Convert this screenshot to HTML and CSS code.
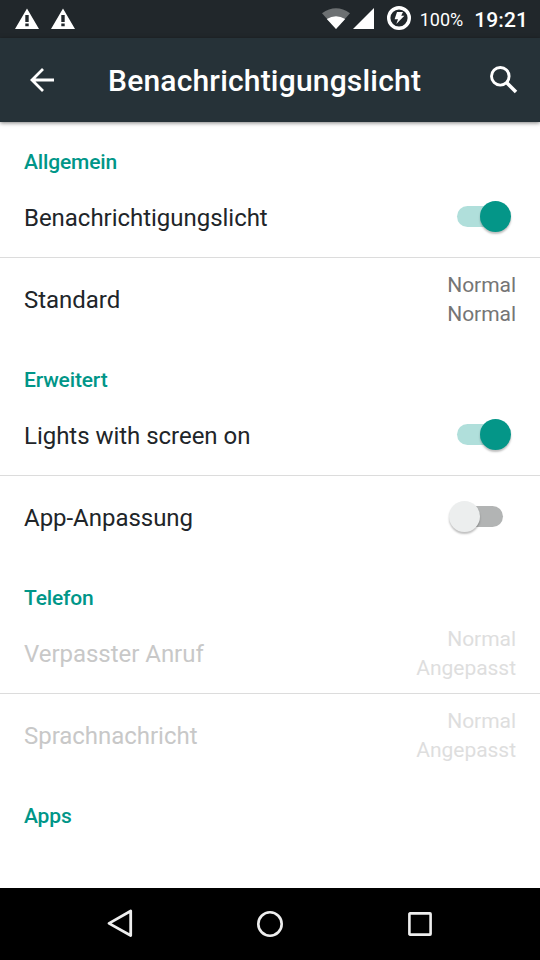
FILE: index.html
```html
<!DOCTYPE html>
<html lang="de">
<head>
    <meta charset="UTF-8">
    <meta name="viewport" content="width=device-width, initial-scale=1.0">
    <title>Benachrichtigungslicht</title>
    <link rel="stylesheet" href="styles.css">
</head>
<body>
    <div class="status-bar">
        <div class="status-left">
            <svg width="24" height="22" viewBox="0 0 24 22">
                <path fill="#fff" fill-rule="evenodd" d="M12 .5 L24 21 H0 Z M10.3 7 V14 H13.7 V7 Z M10.3 15.5 V18.2 H13.7 V15.5 Z"/>
            </svg>
            <svg width="24" height="22" viewBox="0 0 24 22">
                <path fill="#fff" fill-rule="evenodd" d="M12 .5 L24 21 H0 Z M10.3 7 V14 H13.7 V7 Z M10.3 15.5 V18.2 H13.7 V15.5 Z"/>
            </svg>
        </div>
        <div class="status-right">
            <svg class="wifi" width="28" height="22" viewBox="0 0 28 22">
                <path fill="#6c7072" d="M0 5.2 Q14 -4.8 28 5.2 L14 21 Z"/>
                <path fill="#fff" d="M4.8 11 Q14 5.6 23.2 11 L14 21 Z"/>
            </svg>
            <svg class="signal" width="21" height="22" viewBox="0 0 21 22">
                <path fill="#fff" d="M21 0 V21 H0 Z"/>
            </svg>
            <svg class="charge" width="24" height="24" viewBox="0 0 24 24">
                <circle cx="12" cy="12" r="10.3" fill="none" stroke="#fff" stroke-width="3.4"/>
                <path fill="#fff" d="M10 6 H16 L14.2 9.8 H17.4 L9.3 18 L11 13.3 H7.6 Z"/>
            </svg>
            <span class="battery">100%</span>
            <span class="clock">19:21</span>
        </div>
    </div>

    <div class="toolbar">
        <svg width="24" height="24" viewBox="0 0 24 24">
            <path fill="none" stroke="#fff" stroke-width="2.8" d="M24 12 H2.5 M13 1 L2 12 L13 23"/>
        </svg>
        <h1>Benachrichtigungslicht</h1>
        <svg width="28" height="28" viewBox="0 0 28 28">
            <circle cx="10.3" cy="10.3" r="8.8" fill="none" stroke="#fff" stroke-width="2.9"/>
            <path fill="none" stroke="#fff" stroke-width="3.6" d="M16.5 16.5 L26 26"/>
        </svg>
    </div>

    <div class="content">
        <h2>Allgemein</h2>
        <div class="item">
            <span class="item-title">Benachrichtigungslicht</span>
            <div class="switch on"><div class="thumb"></div></div>
        </div>
        <div class="item">
            <span class="item-title">Standard</span>
            <div class="item-value">Normal<br>Normal</div>
        </div>

        <h2>Erweitert</h2>
        <div class="item">
            <span class="item-title">Lights with screen on</span>
            <div class="switch on"><div class="thumb"></div></div>
        </div>
        <div class="item">
            <span class="item-title">App-Anpassung</span>
            <div class="switch"><div class="thumb"></div></div>
        </div>

        <h2>Telefon</h2>
        <div class="item disabled">
            <span class="item-title">Verpasster Anruf</span>
            <div class="item-value">Normal<br>Angepasst</div>
        </div>
        <div class="item disabled">
            <span class="item-title">Sprachnachricht</span>
            <div class="item-value">Normal<br>Angepasst</div>
        </div>

        <h2>Apps</h2>
    </div>

    <div class="nav-bar">
        <svg width="30" height="30" viewBox="0 0 30 30">
            <path fill="none" stroke="#eee" stroke-width="2.8" stroke-linejoin="round" d="M25.7 2 V26.5 L4 14.4 Z"/>
        </svg>
        <svg width="30" height="30" viewBox="0 0 30 30">
            <circle cx="15" cy="15" r="11.7" fill="none" stroke="#eee" stroke-width="2.6"/>
        </svg>
        <svg width="30" height="30" viewBox="0 0 30 30">
            <rect x="4.4" y="4.4" width="21.2" height="21.2" rx=".6" fill="none" stroke="#eee" stroke-width="2.6"/>
        </svg>
    </div>
</body>
</html>
```

FILE: styles.css
```css
* {
    box-sizing: border-box;
}

body {
    margin: 0;
    height: 960px;
    display: flex;
    flex-direction: column;
    overflow: hidden;
    font-family: Roboto, "Noto Sans", sans-serif;
    background-color: #fff;
}

svg {
    display: block;
    flex-shrink: 0;
}

.status-bar {
    display: flex;
    justify-content: space-between;
    height: 38px;
    padding: 0 12px 0 15px;
    background-color: #21272b;
    color: #fff;
}

.status-left {
    display: flex;
    gap: 12px;
    padding-top: 8px;
}

.status-right {
    display: flex;
    align-items: center;
}

.signal {
    margin-left: 3px;
}

.charge {
    margin: 0 9px 2px 13px;
}

.battery {
    font-size: 18px;
    line-height: 38px;
    padding-top: 1px;
}

.clock {
    margin-left: 11px;
    font-size: 21px;
    font-weight: 500;
    line-height: 38px;
    padding-top: 1px;
    letter-spacing: 0.1px;
}

.toolbar {
    display: flex;
    align-items: center;
    flex-shrink: 0;
    height: 84px;
    padding: 0 22px 0 30px;
    background-color: #263238;
    box-shadow: 0 1px 4px rgba(0, 0, 0, 0.5);
}

.toolbar h1 {
    flex: 1;
    margin: 0 0 0 54px;
    padding-top: 2px;
    color: #fff;
    font-size: 30px;
    font-weight: 500;
    line-height: 36px;
    letter-spacing: 0.19px;
}

.content {
    flex: 1;
    overflow: hidden;
}

/* Abschnittstitel */
.content h2 {
    height: 54px;
    margin: 0;
    padding: 28px 24px 0;
    color: #009688;
    font-size: 21px;
    font-weight: 500;
    line-height: 25px;
    letter-spacing: -0.15px;
}

.item {
    display: flex;
    justify-content: space-between;
    align-items: center;
    height: 82px;
    padding: 0 24px;
    border-bottom: 1px solid transparent;
}

.item:has(+ .item) {
    border-bottom-color: #dcdcdc;
}

.item-title {
    padding-top: 2px;
    color: #212529;
    font-size: 24px;
    letter-spacing: -0.03px;
}

.item-value {
    padding-top: 2px;
    color: #757575;
    font-size: 21px;
    line-height: 29px;
    letter-spacing: -0.04px;
    text-align: right;
}

.disabled .item-title {
    color: #c8c8c8;
}

.disabled .item-value {
    color: #dedede;
}

/* Schalter */
.switch {
    position: relative;
    width: 46px;
    height: 21px;
    margin-right: 13px;
    border-radius: 11px;
    background-color: #b2b4b4;
}

.switch .thumb {
    position: absolute;
    top: -5px;
    left: -8px;
    width: 31px;
    height: 31px;
    border-radius: 50%;
    background-color: #eceeee;
    box-shadow: 0 2px 2px rgba(0, 0, 0, 0.25);
}

.switch.on {
    background-color: #b0dfdb;
}

.switch.on .thumb {
    left: 23px;
    background-color: #049688;
}

.nav-bar {
    display: flex;
    justify-content: center;
    align-items: center;
    gap: 120px;
    flex-shrink: 0;
    height: 72px;
    background-color: #000;
}
```
